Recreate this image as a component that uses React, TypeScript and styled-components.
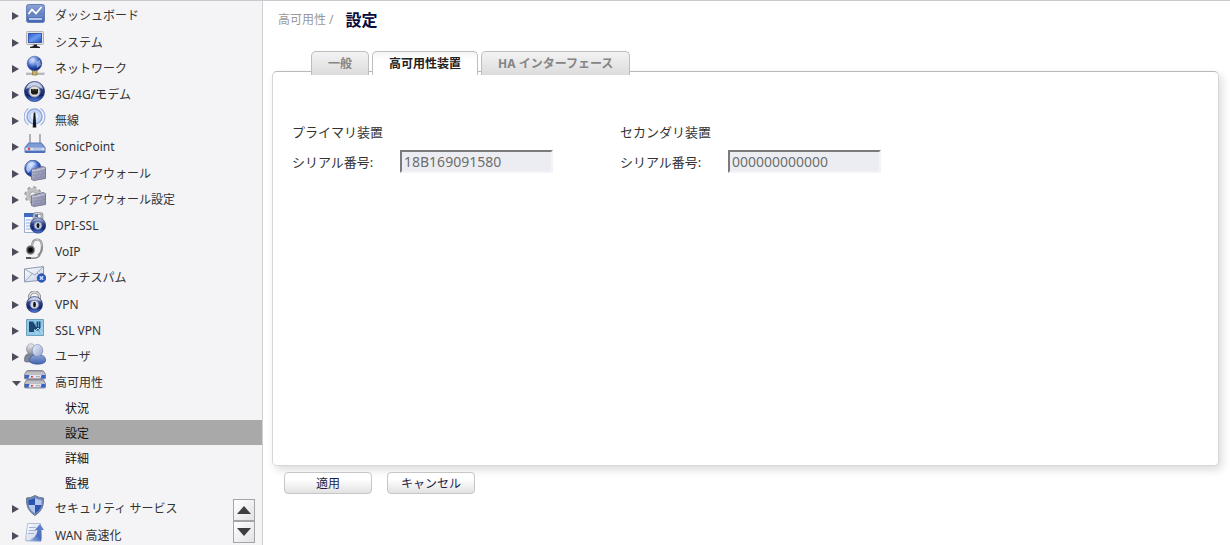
import React from "react";
import styled, { createGlobalStyle } from "styled-components";

const GlobalStyle = createGlobalStyle`
  * { box-sizing: border-box; }
  body {
    margin: 0;
    background: #fff;
    color: #333;
    font: 12px/18px "Noto Sans", "Noto Sans CJK JP", sans-serif;
  }
  button, input { font: inherit; }
  ul { list-style: none; margin: 0; padding: 0; }
  a { color: inherit; text-decoration: none; }
`;

const Page = styled.div`
  display: flex;
  height: 100vh;
  overflow: hidden;
  border-top: 1px solid #c9c9cb;
`;

const Sidebar = styled.nav`
  position: relative;
  flex: 0 0 263px;
  overflow: hidden;
  padding-top: 1px;
  background: #f4f4f7;
  border-right: 1px solid #d0d0d3;
`;

const MenuItem = styled.li`
  &:nth-child(5n + 2) { margin-top: 1px; }
`;

const MenuLink = styled.a`
  display: flex;
  align-items: center;
  height: 26px;
  padding: 2px 0 0 12px;
`;

const Arrow = styled.svg`
  flex: none;
  width: 10px;
  height: 10px;
  margin-right: 2px;
`;

const MenuIcon = styled.svg`
  flex: none;
  align-self: flex-start;
  width: 22px;
  height: 22px;
  margin: -2px 9px 0 0;
`;

const SubLink = styled.a<{ $active?: boolean }>`
  display: block;
  padding: 2px 0 0 65px;
  line-height: 23px;
  color: #111;
  background: ${(p) => (p.$active ? "#a9a9a9" : "transparent")};
`;

const Scroller = styled.div`
  position: absolute;
  right: 7px;
  bottom: 2px;
  display: flex;
  flex-direction: column;
`;

const ScrollButton = styled.button`
  display: flex;
  align-items: center;
  justify-content: center;
  width: 22px;
  height: 22px;
  padding: 0;
  border: 1px solid #a5a5a9;
  background: linear-gradient(135deg, #fff, #e2e2e6);
`;

const Main = styled.main`
  flex: 1;
  min-width: 0;
  padding: 7px 11px 0 9px;
`;

const Breadcrumb = styled.header`
  display: flex;
  align-items: center;
  gap: 12px;
  height: 24px;
  padding-left: 6px;
  color: #999;
`;

const Title = styled.h1`
  margin: 0;
  color: #0a0a3c;
  font-size: 16px;
  line-height: 24px;
`;

const Tabs = styled.div`
  position: relative;
  display: flex;
  align-items: flex-end;
  gap: 3px;
  margin: 19px 0 -4px 39px;
`;

const Tab = styled.button<{ $active?: boolean }>`
  height: 24px;
  padding: 0 16px;
  border: 1px solid #bdbdbd;
  border-bottom: 0;
  border-radius: 5px 5px 0 0;
  background: ${(p) => (p.$active ? "linear-gradient(#f4f4f4, #fff 8px)" : "linear-gradient(#f3f3f3, #dcdcdc)")};
  color: ${(p) => (p.$active ? "#222" : "#858585")};
  font-weight: 700;
  line-height: 22px;
`;

const Panel = styled.section`
  display: grid;
  grid-template-columns: 328px 1fr;
  align-content: start;
  min-height: 395px;
  padding: 51px 19px;
  border: 1px solid #d6d6d6;
  border-top-color: #b9b9b9;
  border-radius: 5px;
  box-shadow: 3px 4px 8px rgba(0, 0, 0, 0.14);
  font-size: 13px;
`;

const Heading = styled.h2`
  margin: 0 0 9px;
  font-size: 13px;
  font-weight: 400;
  line-height: 18px;
`;

const Field = styled.div`
  display: flex;
  align-items: center;
`;

const FieldLabel = styled.label`
  width: 108px;
`;

const TextBox = styled.input`
  width: 153px;
  height: 23px;
  padding: 0 2px;
  border: 2px solid;
  border-color: #7b7b7d #f4f4f6 #f4f4f6 #7b7b7d;
  background: #ecedf2;
  color: #6d6d6d;
  font-size: 14px;
`;

const Actions = styled.footer`
  display: flex;
  gap: 15px;
  padding: 6px 12px;
`;

const Button = styled.button`
  width: 88px;
  height: 22px;
  padding: 1px 0 0;
  border: 1px solid #c6c6c6;
  border-radius: 4px;
  background: linear-gradient(#fff 30%, #e2e2e2);
  color: #1e1e46;
  line-height: 19px;
`;

const Gradients = styled.svg`
  position: absolute;
  width: 0;
  height: 0;
`;

const SharedGradients = () => (
  <Gradients aria-hidden="true">
    <defs>
      <linearGradient id="blue" x1="0" y1="0" x2="0" y2="1">
        <stop offset="0" stopColor="#8da4d6" /><stop offset="1" stopColor="#4263b0" />
      </linearGradient>
      <linearGradient id="screen" x1="0" y1="0" x2="1" y2="1">
        <stop offset="0" stopColor="#2456cf" /><stop offset=".5" stopColor="#6b9bef" /><stop offset="1" stopColor="#1d49bd" />
      </linearGradient>
      <radialGradient id="globe" cx=".38" cy=".28" r=".75">
        <stop offset="0" stopColor="#eef4ff" /><stop offset=".3" stopColor="#87a5e6" /><stop offset=".65" stopColor="#274fb5" /><stop offset="1" stopColor="#0b205f" />
      </radialGradient>
      <linearGradient id="ball" x1="0" y1="0" x2="0" y2="1">
        <stop offset="0" stopColor="#c8d3ec" /><stop offset=".4" stopColor="#2c3f84" /><stop offset=".7" stopColor="#10246d" /><stop offset="1" stopColor="#5b8bf0" />
      </linearGradient>
      <linearGradient id="metal" x1="0" y1="0" x2="0" y2="1">
        <stop offset="0" stopColor="#f3f3f5" /><stop offset="1" stopColor="#8e9098" />
      </linearGradient>
      <linearGradient id="wall" x1="0" y1="0" x2="1" y2="1">
        <stop offset="0" stopColor="#b4b6cb" /><stop offset="1" stopColor="#8c8eac" />
      </linearGradient>
      <linearGradient id="paper" x1="0" y1="0" x2="1" y2="1">
        <stop offset="0" stopColor="#fff" /><stop offset="1" stopColor="#c3cde4" />
      </linearGradient>
      <linearGradient id="head" x1="0" y1="0" x2="1" y2="1">
        <stop offset="0" stopColor="#f2f5fd" /><stop offset="1" stopColor="#8fa3cf" />
      </linearGradient>
      <linearGradient id="case" x1="0" y1="0" x2="0" y2="1">
        <stop offset="0" stopColor="#8f9098" /><stop offset=".3" stopColor="#c6c7cd" /><stop offset="1" stopColor="#9899a2" />
      </linearGradient>
      <linearGradient id="arrow" x1="0" y1="1" x2="1" y2="0">
        <stop offset="0" stopColor="#c3d0ec" /><stop offset=".5" stopColor="#4a6cbd" /><stop offset="1" stopColor="#6d8bd0" />
      </linearGradient>
    </defs>
  </Gradients>
);

const Wall = () => (
  <g>
    <path d="M7.500 9.500L19 6.500L21.500 7.500V18.500L10 20.500L7.500 19.500Z" fill="url(#wall)" stroke="#686a85" strokeWidth=".8" />
    <path d="M9 12.500L21 10.500M9 15.500L21 13.500M9 18.500L21 16.500M12 9V12M17 8V11M14.500 12V14.500M19 11V14M12 15V18M17 14V17" stroke="#7f81a3" strokeWidth=".5" />
    <path d="M8 10L10.500 10.800L21 8" fill="none" stroke="#d6d8e5" strokeWidth=".8" />
  </g>
);

const Padlock = () => (
  <g>
    <path d="M5.500 9V6A5 5 0 0 1 15.500 6V9" fill="none" stroke="#8a8c92" strokeWidth="3" />
    <path d="M5.500 9V6A5 5 0 0 1 15.500 6V9" fill="none" stroke="#dcdde0" strokeWidth="1.300" />
    <circle cx="10.500" cy="13.500" r="8" fill="url(#ball)" stroke="#14235c" strokeWidth=".6" />
    <path d="M4 10Q6 6.500 10.500 6.500T17 10Q10.500 8 4 10Z" fill="#e1e7f5" opacity=".7" />
    <circle cx="10.500" cy="13.500" r="4.300" fill="#d7dae4" stroke="#7785ad" />
    <ellipse cx="10.500" cy="13.500" rx="1.400" ry="2.800" fill="#11131f" />
  </g>
);

const ServerUnit = () => (
  <g>
    <path d="M4 .5H18Q20 .5 21.500 4.500V8Q21.500 9 20.500 9H1.500Q.5 9 .5 8V4.500Q2 .5 4 .5Z" fill="url(#case)" stroke="#777882" strokeWidth=".8" />
    <path d="M1 5H21V8.300H1Z" fill="#e4e5ec" />
    <path d="M.8 5H5.500L4.500 8.500H.8ZM17.500 5H21.200V8.500H16.500Z" fill="#3a62c9" />
    <path d="M7 6.700H8.800" stroke="#db2530" strokeWidth="1.600" />
    <path d="M12 6.700H16" stroke="#a3a4b0" />
  </g>
);

const icons: Record<string, React.ReactNode> = {
  dashboard: (
    <g fill="none">
      <rect x="2.500" y="2.500" width="18" height="18" rx="2" fill="url(#blue)" stroke="#6680b8" />
      <path d="M4.500 12L8 7.500L12 11.500L17.500 5" stroke="#fff" strokeWidth="1.800" />
      <path d="M5 17H18" stroke="#dbe4f8" strokeWidth="1.500" />
      <path d="M4 14H19" stroke="#7793ce" />
    </g>
  ),
  system: (
    <g>
      <rect x="2.500" y="2.500" width="17" height="13" rx="1" fill="#e2e2e5" stroke="#b1b1b6" />
      <rect x="4.500" y="4.500" width="13" height="9" fill="url(#screen)" stroke="#3a58ad" />
      <path d="M9.500 15.500H13V17L16 18V19H6V18L9.500 17Z" fill="#202126" />
    </g>
  ),
  network: (
    <g>
      <path d="M2 17.500H20.500V20H2Z" fill="#b6b7ba" /><path d="M2 17.500H20.500" stroke="#dedee0" />
      <path d="M8.500 14H13V20H8.500Z" fill="#cbb35e" stroke="#827139" strokeWidth=".7" />
      <circle cx="10.500" cy="8.500" r="7.300" fill="url(#globe)" stroke="#4660a1" strokeWidth=".6" />
      <path d="M5 5Q8 2 11 4L9 7L6 9ZM12 7L16 5L17 10L13 13Z" fill="#b9cdf5" opacity=".6" />
    </g>
  ),
  modem: (
    <g>
      <circle cx="10.500" cy="10.500" r="10" fill="url(#ball)" stroke="#1a2d6e" strokeWidth=".8" />
      <path d="M2 8Q4 1.500 10.500 1.500T19 8Q10.500 3 2 8Z" fill="#e5eaf5" opacity=".7" />
      <circle cx="10.500" cy="10.500" r="5.600" fill="#dcdcd9" stroke="#8d97b2" />
      <path d="M7 8H14V12L12.500 13.500H8.500L7 12Z" fill="#1d1e18" />
      <path d="M9 8V9.500M12 8V9.500" stroke="#a3955b" strokeWidth=".8" />
    </g>
  ),
  wireless: (
    <g fill="none">
      <circle cx="10.500" cy="9.500" r="7.500" fill="#cbd9f6" stroke="#8ea9de" strokeWidth="1.500" />
      <path d="M4.500 18A10 10 0 0 1 4.500 1.500M16.500 18A10 10 0 0 0 16.500 1.500" stroke="#9fb3de" strokeWidth="1.200" />
      <circle cx="10.500" cy="9" r="4.500" fill="#e3ecfd" stroke="#b5c8ee" />
      <path d="M9.700 5.500H11.300L12.300 20.500H8.700Z" fill="#15161c" />
    </g>
  ),
  router: (
    <g>
      <path d="M6 1V12M16 1V12" stroke="#a9abb0" strokeWidth="1.800" />
      <path d="M4.500 9.500H17.500L21.500 14.500V18.500Q21.500 20 20 20H2Q.5 20 .5 18.500V14.500Z" fill="#5b7abf" />
      <path d="M5 10.500H17L19.500 14H2.500Z" fill="#7f9bd6" />
      <path d="M1.500 14.500H20.500V17.500H1.500Z" fill="#d8e1f5" />
      <path d="M1 19H21" stroke="#3f69c4" /><circle cx="5" cy="16" r="1.300" fill="#e4473f" />
      <path d="M9 16H18" stroke="#9dafd6" />
    </g>
  ),
  firewall: (
    <g>
      <circle cx="9" cy="8.500" r="8.300" fill="url(#globe)" stroke="#173577" strokeWidth=".6" />
      <path d="M2 9Q4 2 9 2L12 4L8 6L7 10L4 13Z" fill="#d5e4ff" opacity=".65" />
      <Wall />
    </g>
  ),
  firewallSettings: (
    <g>
      <circle cx="9" cy="9" r="7.300" fill="none" stroke="#9b9da0" strokeWidth="2.800" strokeDasharray="2.867 2.867" />
      <circle cx="9" cy="9" r="5.200" fill="none" stroke="#bfc1c3" strokeWidth="4" />
      <circle cx="9" cy="9" r="3.200" fill="#eee" stroke="#8c8e91" strokeWidth=".8" />
      <Wall />
    </g>
  ),
  dpi: (
    <g>
      <path d="M.5 1.500H13V20.500H.5Z" fill="#f6f8fd" stroke="#9caed2" /><path d="M0 1H14V5H0Z" fill="#4069bf" />
      <path d="M2 8H10M2 11H8M2 14H8M2 17H8" stroke="#b4c7ec" strokeWidth="1.500" />
      <path d="M10 8V3.500Q10 1.500 12 1.500H16Q18 1.500 18 3.500V8" fill="none" stroke="#83858a" strokeWidth="2.600" />
      <path d="M10 8V3.500Q10 1.500 12 1.500H16Q18 1.500 18 3.500V8" fill="none" stroke="#d6d7da" />
      <circle cx="14" cy="13.500" r="7.700" fill="url(#ball)" stroke="#14235c" strokeWidth=".6" />
      <circle cx="14" cy="13.500" r="4" fill="#c7cddd" stroke="#667ab5" /><ellipse cx="14" cy="13.500" rx="1.400" ry="2.600" fill="#10131f" />
    </g>
  ),
  voip: (
    <g fill="none">
      <path d="M8 9Q8 1.500 13 1.500Q18 1.500 18 8.500Q18 15 14 17.500" stroke="#8a8b8e" strokeWidth="2.200" />
      <path d="M8 9Q8 1.500 13 1.500Q18 1.500 18 8.500" stroke="#d0d0d2" strokeWidth=".8" />
      <ellipse cx="6.500" cy="12" rx="4" ry="4.200" fill="#3c3d40" stroke="#9b9ca0" /><circle cx="6.500" cy="12" r="2.300" fill="#08080a" />
      <path d="M6 20Q14 21 16 17" stroke="#85868a" strokeWidth="1.500" /><path d="M2 20H7" stroke="#55565b" strokeWidth="2" />
    </g>
  ),
  mail: (
    <g>
      <path d="M.5 5L19.500 2.500V16L.5 18Z" fill="url(#paper)" stroke="#8d99b0" />
      <path d="M.5 5L11 11L19.500 2.500M.5 18L8.500 9.500M19.500 16L13 9" fill="none" stroke="#9ba7bd" />
      <circle cx="17.500" cy="14" r="4.300" fill="#2858bd" stroke="#193b8a" strokeWidth=".6" />
      <path d="M15.800 12.300L19.200 15.700M19.200 12.300L15.800 15.700" stroke="#c8dcff" strokeWidth="1.600" />
    </g>
  ),
  vpn: <Padlock />,
  ssl: (
    <g>
      <path d="M2.500 2.500H19.500V18.500H2.500Z" fill="#91cae6" stroke="#6fa0bd" />
      <path d="M5 4.500H9L12.500 10V4.500H16.500V12L15 15L10 12V15H5Z" fill="#1d4770" />
      <path d="M9 4L13 10M15 15L12 12M14.500 4V10" stroke="#5d9ac2" /><path d="M11 14L14 11L19 17M12 17L18 10" fill="none" stroke="#b5e0f5" />
    </g>
  ),
  users: (
    <g strokeWidth=".6">
      <path d="M.5 18Q0 11 5 10.500H9L12 19H3Q.5 19 .5 18Z" fill="#7d8697" stroke="#555f72" />
      <ellipse cx="7" cy="6" rx="4.500" ry="5.200" fill="url(#metal)" stroke="#7b818e" />
      <path d="M5.500 18Q5.500 12.500 10.500 12H16.500Q21.700 12.500 21.700 18Q20 21.200 13.500 21.200Q7 21.200 5.500 18Z" fill="url(#blue)" stroke="#2b4c90" />
      <ellipse cx="13.500" cy="7.500" rx="5.300" ry="6" fill="url(#head)" stroke="#6b7fab" />
    </g>
  ),
  servers: (<g><g transform="translate(0 1)"><ServerUnit /></g><g transform="translate(0 10)"><ServerUnit /></g></g>),
  shield: (
    <g>
      <path d="M11 .5Q15 3 19.500 3Q20.500 15 11 20.500Q1.500 15 2.500 3Q7 3 11 .5Z" fill="#6d86bd" stroke="#6d788f" />
      <path d="M11 3Q7.500 5 4.500 5V10H11ZM11 10H17.500Q16.500 15 11 18.500Z" fill="#2a54ae" />
      <path d="M11 3Q14.500 5 17.500 5V10H11ZM4.500 10H11V18.500Q5.500 15 4.500 10Z" fill="#b3c7ee" />
    </g>
  ),
  wan: (
    <g fill="none">
      <path d="M3.500 1.500H16.500V18.500H1.500Z" fill="url(#paper)" stroke="#b3bfd6" />
      <path d="M5 5.500H12M5 8.500H12M4 11.500H10" stroke="#9fb3da" />
      <path d="M2 19Q13 17 13.500 8H11L16 2L20 8H17.500Q18 18 17 19.500H2Z" fill="url(#arrow)" />
    </g>
  ),
};

const menu: { label: string; icon: string; children?: string[] }[] = [
  { label: "ダッシュボード", icon: "dashboard" },
  { label: "システム", icon: "system" },
  { label: "ネットワーク", icon: "network" },
  { label: "3G/4G/モデム", icon: "modem" },
  { label: "無線", icon: "wireless" },
  { label: "SonicPoint", icon: "router" },
  { label: "ファイアウォール", icon: "firewall" },
  { label: "ファイアウォール設定", icon: "firewallSettings" },
  { label: "DPI-SSL", icon: "dpi" },
  { label: "VoIP", icon: "voip" },
  { label: "アンチスパム", icon: "mail" },
  { label: "VPN", icon: "vpn" },
  { label: "SSL VPN", icon: "ssl" },
  { label: "ユーザ", icon: "users" },
  { label: "高可用性", icon: "servers", children: ["状況", "設定", "詳細", "監視"] },
  { label: "セキュリティ サービス", icon: "shield" },
  { label: "WAN 高速化", icon: "wan" },
];

const units = [
  { id: "primary", heading: "プライマリ装置", serial: "18B169091580" },
  { id: "secondary", heading: "セカンダリ装置", serial: "000000000000" },
];

export default function App() {
  return (
    <Page lang="ja">
      <GlobalStyle />
      <SharedGradients />
      <Sidebar>
        <ul>
          {menu.map(({ label, icon, children }) => (
            <MenuItem key={label}>
              <MenuLink href="#">
                <Arrow viewBox="0 0 10 10" aria-hidden="true">
                  <path d={children ? "M0 3H9L4.500 8Z" : "M0 1L7 5L0 9Z"} fill="#4f4c5c" />
                </Arrow>
                <MenuIcon viewBox="0 0 22 22" aria-hidden="true">{icons[icon]}</MenuIcon>
                {label}
              </MenuLink>
              {children && (
                <ul>
                  {children.map((child) => (
                    <li key={child}><SubLink href="#" $active={child === "設定"}>{child}</SubLink></li>
                  ))}
                </ul>
              )}
            </MenuItem>
          ))}
        </ul>
        <Scroller>
          <ScrollButton aria-label="上へ">
            <svg width="14" height="8"><path d="M0 8L7 0L14 8Z" fill="#3d3d42" /></svg>
          </ScrollButton>
          <ScrollButton aria-label="下へ">
            <svg width="14" height="8"><path d="M0 0H14L7 8Z" fill="#3d3d42" /></svg>
          </ScrollButton>
        </Scroller>
      </Sidebar>
      <Main>
        <Breadcrumb>
          <span>高可用性 /</span>
          <Title>設定</Title>
        </Breadcrumb>
        <Tabs role="tablist">
          <Tab role="tab">一般</Tab>
          <Tab role="tab" aria-selected="true" $active>高可用性装置</Tab>
          <Tab role="tab">HA インターフェース</Tab>
        </Tabs>
        <Panel>
          {units.map(({ id, heading, serial }) => (
            <div key={id}>
              <Heading>{heading}</Heading>
              <Field>
                <FieldLabel htmlFor={id}>シリアル番号:</FieldLabel>
                <TextBox id={id} defaultValue={serial} disabled />
              </Field>
            </div>
          ))}
        </Panel>
        <Actions>
          <Button>適用</Button>
          <Button>キャンセル</Button>
        </Actions>
      </Main>
    </Page>
  );
}
